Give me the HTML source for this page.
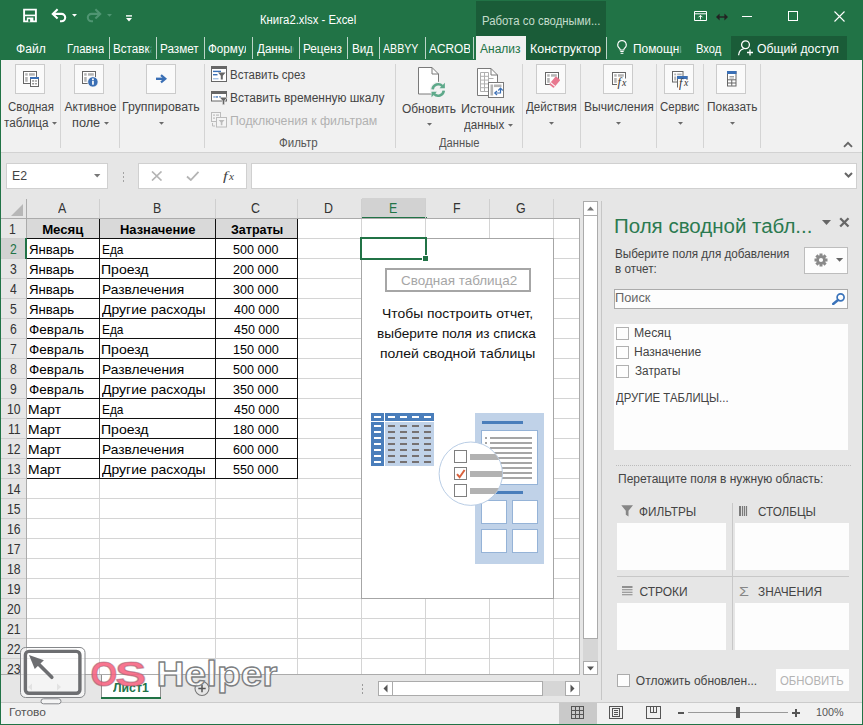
<!DOCTYPE html>
<html lang="ru"><head><meta charset="utf-8"><title>Книга2.xlsx - Excel</title>
<style>
html,body{margin:0;padding:0}
body{width:863px;height:725px;position:relative;overflow:hidden;background:#e6e6e6;font-family:"Liberation Sans",sans-serif;font-size:12px;color:#444}
.a{position:absolute;display:block}
.t{position:absolute;white-space:nowrap;transform-origin:0 0;display:block}
</style></head><body>
<div class="a" style="left:0px;top:0px;width:863px;height:60px;background:#217346;"></div>
<div class="a" style="left:476px;top:1px;width:130px;height:59px;background:#1a5c38;"></div>
<span class="t" style="left:259.59px;top:13.74px;font-size:12px;line-height:12px;color:#fff;transform:scaleX(0.9448);">Книга2.xlsx - Excel</span>
<span class="t" style="left:482.09px;top:14.54px;font-size:12px;line-height:12px;color:#c4dccc;transform:scaleX(0.9476);">Работа со сводными...</span>
<span class="t" style="left:15.58px;top:42.84px;font-size:12px;line-height:12px;color:#fff;transform:scaleX(1.0082);">Файл</span>
<div class="a" style="left:65.5px;top:36px;width:38.5px;height:24px;overflow:hidden">
<span class="t" style="left:1.09px;top:6.84px;font-size:12px;line-height:12px;color:#fff;transform:scaleX(0.9500)">Главная</span>
</div>
<div class="a" style="left:112.25px;top:36px;width:39.75px;height:24px;overflow:hidden">
<span class="t" style="left:1.07px;top:6.84px;font-size:12px;line-height:12px;color:#fff;transform:scaleX(0.9700)">Вставка</span>
<div class="a" style="right:0;top:0;width:4px;height:24px;background:linear-gradient(90deg,rgba(33,115,70,0),#217346)"></div>
</div>
<div class="a" style="left:159.25px;top:36px;width:39.75px;height:24px;overflow:hidden">
<span class="t" style="left:1.06px;top:6.84px;font-size:12px;line-height:12px;color:#fff;transform:scaleX(0.9750)">Разметка</span>
</div>
<div class="a" style="left:207px;top:36px;width:39.3px;height:24px;overflow:hidden">
<span class="t" style="left:1.36px;top:6.84px;font-size:12px;line-height:12px;color:#fff;transform:scaleX(0.9700)">Формулы</span>
</div>
<div class="a" style="left:254.75px;top:36px;width:39.25px;height:24px;overflow:hidden">
<span class="t" style="left:1.94px;top:6.84px;font-size:12px;line-height:12px;color:#fff;transform:scaleX(0.9700)">Данные</span>
<div class="a" style="right:0;top:0;width:4px;height:24px;background:linear-gradient(90deg,rgba(33,115,70,0),#217346)"></div>
</div>
<div class="a" style="left:302px;top:36px;width:39.7px;height:24px;overflow:hidden">
<span class="t" style="left:1.06px;top:6.84px;font-size:12px;line-height:12px;color:#fff;transform:scaleX(0.9800)">Рецензирование</span>
</div>
<span class="t" style="left:352.07px;top:42.84px;font-size:12px;line-height:12px;color:#fff;transform:scaleX(0.9718);">Вид</span>
<span class="t" style="left:382.75px;top:42.84px;font-size:12px;line-height:12px;color:#fff;transform:scaleX(0.8861);">ABBYY</span>
<div class="a" style="left:426.5px;top:36px;width:43.8px;height:24px;overflow:hidden">
<span class="t" style="left:2.00px;top:6.84px;font-size:12px;line-height:12px;color:#fff;transform:scaleX(0.9850)">ACROBAT</span>
</div>
<div class="a" style="left:109px;top:37px;width:1px;height:22px;background:rgba(255,255,255,.7);"></div>
<div class="a" style="left:156px;top:37px;width:1px;height:22px;background:rgba(255,255,255,.7);"></div>
<div class="a" style="left:204px;top:37px;width:1px;height:22px;background:rgba(255,255,255,.7);"></div>
<div class="a" style="left:252px;top:37px;width:1px;height:22px;background:rgba(255,255,255,.7);"></div>
<div class="a" style="left:299px;top:37px;width:1px;height:22px;background:rgba(255,255,255,.7);"></div>
<div class="a" style="left:347px;top:37px;width:1px;height:22px;background:rgba(255,255,255,.7);"></div>
<div class="a" style="left:379px;top:37px;width:1px;height:22px;background:rgba(255,255,255,.7);"></div>
<div class="a" style="left:425px;top:37px;width:1px;height:22px;background:rgba(255,255,255,.7);"></div>
<div class="a" style="left:473px;top:37px;width:1px;height:22px;background:rgba(255,255,255,.7);"></div>
<div class="a" style="left:606px;top:37px;width:1px;height:22px;background:rgba(255,255,255,.7);"></div>
<div class="a" style="left:476px;top:36px;width:50px;height:24px;background:#f1f1f1;"></div>
<span class="t" style="left:480.00px;top:42.84px;font-size:12px;line-height:12px;color:#217346;">Анализ</span>
<span class="t" style="left:530.25px;top:42.84px;font-size:12px;line-height:12px;color:#fff;transform:scaleX(1.0379);">Конструктор</span>
<svg class="a" style="left:615px;top:39px;" width="14" height="16" viewBox="0 0 14 16"><path d="M7 1.5a4.3 4.3 0 0 0-2.6 7.7c.5.5.8 1 .8 1.8h3.6c0-.8.3-1.3.8-1.8A4.3 4.3 0 0 0 7 1.5z" fill="none" stroke="#fff" stroke-width="1.1"/><path d="M5.3 12.5h3.4M5.6 14.3h2.8" stroke="#fff" stroke-width="1"/></svg>
<div class="a" style="left:632px;top:36px;width:49.5px;height:24px;overflow:hidden">
<span class="t" style="left:1.05px;top:6.84px;font-size:12px;line-height:12px;color:#fff;transform:scaleX(0.9900)">Помощник</span>
<div class="a" style="right:0;top:0;width:4px;height:24px;background:linear-gradient(90deg,rgba(33,115,70,0),#217346)"></div>
</div>
<span class="t" style="left:695.86px;top:42.84px;font-size:12px;line-height:12px;color:#fff;transform:scaleX(0.9313);">Вход</span>
<div class="a" style="left:731px;top:36px;width:116px;height:24px;background:#1a5c38;"></div>
<svg class="a" style="left:737px;top:39px;" width="18" height="18" viewBox="0 0 18 18"><circle cx="8.5" cy="5.8" r="3.9" fill="none" stroke="#fff" stroke-width="1.3"/><path d="M1.6 16.2c.3-3.6 2.6-6 5-6.4" fill="none" stroke="#fff" stroke-width="1.3"/><path d="M13 10.5v6M10 13.5h6" stroke="#fff" stroke-width="1.3"/></svg>
<span class="t" style="left:757.45px;top:42.84px;font-size:12px;line-height:12px;color:#fff;transform:scaleX(1.0156);">Общий доступ</span>
<svg class="a" style="left:22px;top:8px;" width="16" height="16" viewBox="0 0 16 16"><path d="M2.100 1.600h11.800v11.800H2.100z" fill="none" stroke="#fff" stroke-width="1.900"/><path d="M3 7.400h10" stroke="#fff" stroke-width="1.600"/><path d="M4.800 9.500h6.600v4H4.800z" fill="#fff"/><path d="M6.200 11.200h1.900v2.600H6.200z" fill="#217346"/></svg>
<svg class="a" style="left:50px;top:8px;" width="18" height="15" viewBox="0 0 18 15"><path d="M3 5.900h8.500a3.700 3.700 0 0 1 0 7.400H10" fill="none" stroke="#fff" stroke-width="2.100"/><path d="M7.600 1.300 2.800 5.900l4.800 4.600" fill="none" stroke="#fff" stroke-width="2.100"/></svg>
<svg class="a" style="left:72px;top:14px;" width="5" height="3" viewBox="0 0 5 3"><path d="M0 0h5L2.500 2.800z" fill="#fff"/></svg>
<svg class="a" style="left:85.4px;top:8px;" width="18" height="15" viewBox="0 0 18 15"><path d="M15 5.900H6.500a3.700 3.700 0 0 0 0 7.400H8" fill="none" stroke="#4f9572" stroke-width="2.100"/><path d="M10.400 1.300l4.800 4.600-4.800 4.600" fill="none" stroke="#4f9572" stroke-width="2.100"/></svg>
<svg class="a" style="left:107px;top:14px;" width="5" height="3" viewBox="0 0 5 3"><path d="M0 0h5L2.500 2.800z" fill="#4f9572"/></svg>
<svg class="a" style="left:125.5px;top:14.5px;" width="7" height="8" viewBox="0 0 7 8"><path d="M0 .9h6" stroke="#fff" stroke-width="1.400"/><path d="M0 3.100h6L3 6.500z" fill="#fff"/></svg>
<svg class="a" style="left:694px;top:11px;" width="13" height="10" viewBox="0 0 13 10"><path d="M.5.5h12v9H.5z" fill="none" stroke="#fff" stroke-width="1"/><path d="M.5 2.800h12" stroke="#fff" stroke-width="1"/><path d="M6.500 8.500V4.500M4.500 6.300l2-2 2 2" fill="none" stroke="#fff" stroke-width="1"/></svg>
<svg class="a" style="left:716px;top:12px;" width="12" height="10" viewBox="0 0 12 10"><path d="M1.2 5h9.6" stroke="#222" stroke-width="1.4"/><path d="M0 5l3.6-3.4v6.8zM12 5 8.400 1.600v6.800z" fill="#222"/></svg>
<div class="a" style="left:742px;top:16px;width:10px;height:1px;background:#fff;"></div>
<div class="a" style="left:788px;top:11px;width:10px;height:10px;border:1px solid #fff;box-sizing:border-box;"></div>
<svg class="a" style="left:834px;top:11px;" width="11" height="11" viewBox="0 0 11 11"><path d="M.5.5l10 10M10.5.5l-10 10" stroke="#fff" stroke-width="1.1"/></svg>
<div class="a" style="left:1px;top:60px;width:861px;height:92px;background:#f1f1f1;"></div>
<div class="a" style="left:1px;top:152px;width:861px;height:1px;background:#d2d2d2;"></div>
<div class="a" style="left:60px;top:64px;width:1px;height:84px;background:#d4d4d4;"></div>
<div class="a" style="left:119px;top:64px;width:1px;height:84px;background:#d4d4d4;"></div>
<div class="a" style="left:204px;top:64px;width:1px;height:84px;background:#d4d4d4;"></div>
<div class="a" style="left:395px;top:64px;width:1px;height:84px;background:#d4d4d4;"></div>
<div class="a" style="left:522px;top:64px;width:1px;height:84px;background:#d4d4d4;"></div>
<div class="a" style="left:580px;top:64px;width:1px;height:84px;background:#d4d4d4;"></div>
<div class="a" style="left:656px;top:64px;width:1px;height:84px;background:#d4d4d4;"></div>
<div class="a" style="left:703px;top:64px;width:1px;height:84px;background:#d4d4d4;"></div>
<div class="a" style="left:760px;top:64px;width:1px;height:84px;background:#d4d4d4;"></div>
<div class="a" style="left:15px;top:64px;width:30px;height:30px;background:#fafafa;border:1px solid #cbcbcb;box-sizing:border-box;"></div>
<div class="a" style="left:74px;top:64px;width:30px;height:30px;background:#fafafa;border:1px solid #cbcbcb;box-sizing:border-box;"></div>
<div class="a" style="left:146px;top:64px;width:30px;height:30px;background:#fafafa;border:1px solid #cbcbcb;box-sizing:border-box;"></div>
<div class="a" style="left:536px;top:64px;width:30px;height:30px;background:#fafafa;border:1px solid #cbcbcb;box-sizing:border-box;"></div>
<div class="a" style="left:603px;top:64px;width:30px;height:30px;background:#fafafa;border:1px solid #cbcbcb;box-sizing:border-box;"></div>
<div class="a" style="left:664px;top:64px;width:30px;height:30px;background:#fafafa;border:1px solid #cbcbcb;box-sizing:border-box;"></div>
<div class="a" style="left:716px;top:64px;width:30px;height:30px;background:#fafafa;border:1px solid #cbcbcb;box-sizing:border-box;"></div>
<span class="t" style="left:8.18px;top:100.84px;font-size:12px;line-height:12px;color:#444;transform:scaleX(0.9521);">Сводная</span>
<span class="t" style="left:4.32px;top:116.64px;font-size:12px;line-height:12px;color:#444;transform:scaleX(0.9742);">таблица</span>
<svg class="a" style="left:52px;top:121.6px;" width="5" height="3" viewBox="0 0 5 3"><path d="M0 0h5L2.500 2.700z" fill="#6a6a6a"/></svg>
<span class="t" style="left:64.50px;top:100.84px;font-size:12px;line-height:12px;color:#444;">Активное</span>
<span class="t" style="left:72.36px;top:116.64px;font-size:12px;line-height:12px;color:#444;transform:scaleX(1.0590);">поле</span>
<svg class="a" style="left:103.7px;top:121.6px;" width="5" height="3" viewBox="0 0 5 3"><path d="M0 0h5L2.500 2.700z" fill="#6a6a6a"/></svg>
<span class="t" style="left:122.27px;top:100.84px;font-size:12px;line-height:12px;color:#444;transform:scaleX(1.0257);">Группировать</span>
<svg class="a" style="left:159.2px;top:121.6px;" width="5" height="3" viewBox="0 0 5 3"><path d="M0 0h5L2.500 2.700z" fill="#6a6a6a"/></svg>
<span class="t" style="left:229.58px;top:68.84px;font-size:12px;line-height:12px;color:#444;transform:scaleX(0.9568);">Вставить срез</span>
<span class="t" style="left:229.55px;top:91.84px;font-size:12px;line-height:12px;color:#444;transform:scaleX(0.9947);">Вставить временную шкалу</span>
<span class="t" style="left:229.52px;top:114.84px;font-size:12px;line-height:12px;color:#b1b1b1;transform:scaleX(1.0241);">Подключения к фильтрам</span>
<span class="t" style="left:278.87px;top:137.14px;font-size:12px;line-height:12px;color:#555;transform:scaleX(0.9571);">Фильтр</span>
<span class="t" style="left:401.96px;top:102.84px;font-size:12px;line-height:12px;color:#444;transform:scaleX(0.9947);">Обновить</span>
<svg class="a" style="left:427.2px;top:123.3px;" width="5" height="3" viewBox="0 0 5 3"><path d="M0 0h5L2.500 2.700z" fill="#6a6a6a"/></svg>
<span class="t" style="left:461.00px;top:102.84px;font-size:12px;line-height:12px;color:#444;transform:scaleX(1.0442);">Источник</span>
<span class="t" style="left:463.88px;top:118.84px;font-size:12px;line-height:12px;color:#444;transform:scaleX(0.9676);">данных</span>
<svg class="a" style="left:507.7px;top:123.6px;" width="5" height="3" viewBox="0 0 5 3"><path d="M0 0h5L2.500 2.700z" fill="#6a6a6a"/></svg>
<span class="t" style="left:438.94px;top:137.14px;font-size:12px;line-height:12px;color:#555;transform:scaleX(0.9350);">Данные</span>
<span class="t" style="left:525.94px;top:100.84px;font-size:12px;line-height:12px;color:#444;transform:scaleX(0.9667);">Действия</span>
<svg class="a" style="left:549.2px;top:121.6px;" width="5" height="3" viewBox="0 0 5 3"><path d="M0 0h5L2.500 2.700z" fill="#6a6a6a"/></svg>
<span class="t" style="left:583.53px;top:100.84px;font-size:12px;line-height:12px;color:#444;transform:scaleX(1.0101);">Вычисления</span>
<svg class="a" style="left:616.2px;top:121.6px;" width="5" height="3" viewBox="0 0 5 3"><path d="M0 0h5L2.500 2.700z" fill="#6a6a6a"/></svg>
<span class="t" style="left:659.93px;top:100.84px;font-size:12px;line-height:12px;color:#444;transform:scaleX(0.9577);">Сервис</span>
<svg class="a" style="left:677.7px;top:121.6px;" width="5" height="3" viewBox="0 0 5 3"><path d="M0 0h5L2.500 2.700z" fill="#6a6a6a"/></svg>
<span class="t" style="left:706.55px;top:100.84px;font-size:12px;line-height:12px;color:#444;transform:scaleX(0.9887);">Показать</span>
<svg class="a" style="left:729.7px;top:121.6px;" width="5" height="3" viewBox="0 0 5 3"><path d="M0 0h5L2.500 2.700z" fill="#6a6a6a"/></svg>
<svg class="a" style="left:843px;top:141px;" width="10" height="7" viewBox="0 0 10 7"><path d="M1 5.800 5 1.800 9 5.800" fill="none" stroke="#666" stroke-width="1.900"/></svg>
<div class="a" style="left:6px;top:163px;width:102px;height:26px;background:#fff;border:1px solid #d0d0d0;box-sizing:border-box;"></div>
<span class="t" style="left:12.32px;top:169.84px;font-size:12px;line-height:12px;color:#444;transform:scaleX(1.0245);">E2</span>
<svg class="a" style="left:94px;top:174px;" width="7" height="4" viewBox="0 0 7 4"><path d="M0 0h6.400L3.2 3.600z" fill="#777"/></svg>
<div class="a" style="left:122.5px;top:172px;width:1.5px;height:1.5px;background:#a3a3a3;"></div>
<div class="a" style="left:122.5px;top:176px;width:1.5px;height:1.5px;background:#a3a3a3;"></div>
<div class="a" style="left:122.5px;top:180px;width:1.5px;height:1.5px;background:#a3a3a3;"></div>
<div class="a" style="left:138px;top:163px;width:109px;height:26px;background:#fff;border:1px solid #d0d0d0;box-sizing:border-box;"></div>
<svg class="a" style="left:151px;top:171px;" width="12" height="10" viewBox="0 0 12 10"><path d="M1 .5l9.500 9M10.500.5 1 9.500" stroke="#b4b4b4" stroke-width="1.700" fill="none"/></svg>
<svg class="a" style="left:186px;top:171px;" width="14" height="10" viewBox="0 0 14 10"><path d="M1 5.500 4.800 9 12.500.8" stroke="#b4b4b4" stroke-width="1.800" fill="none"/></svg>
<span class="t" style="left:223.13px;top:169.07px;font-size:13.5px;line-height:13.5px;color:#444;transform:scaleX(1.2506);font-style:italic;font-family:'Liberation Serif',serif;">f</span>
<span class="t" style="left:229.37px;top:173.26px;font-size:9.5px;line-height:9.5px;color:#444;transform:scaleX(1.1799);font-style:italic;font-family:'Liberation Serif',serif;">x</span>
<div class="a" style="left:251px;top:163px;width:606px;height:26px;background:#fff;border:1px solid #d0d0d0;box-sizing:border-box;"></div>
<svg class="a" style="left:844px;top:172px;" width="9" height="6" viewBox="0 0 9 6"><path d="M1 1l3.500 3.500L8 1" fill="none" stroke="#666" stroke-width="2"/></svg>
<svg class="a" style="left:11px;top:204px;" width="12" height="12" viewBox="0 0 12 12"><path d="M12 0v12H0z" fill="#b7b7b7"/></svg>
<div class="a" style="left:27px;top:219px;width:553px;height:456px;background:#fff;"></div>
<div class="a" style="left:362px;top:198px;width:64px;height:19px;background:#d2d2d2;"></div>
<div class="a" style="left:362px;top:217px;width:65px;height:2px;background:#217346;"></div>
<div class="a" style="left:1px;top:239px;width:25px;height:19px;background:#d2d2d2;"></div>
<div class="a" style="left:25px;top:238px;width:2px;height:21px;background:#217346;"></div>
<svg class="a" style="left:0;top:0" width="863" height="725" shape-rendering="crispEdges"><rect x="27" y="238" width="553" height="1" fill="#d4d4d4"/><rect x="1" y="238" width="25" height="1" fill="#cfcfcf"/><rect x="27" y="258" width="553" height="1" fill="#d4d4d4"/><rect x="1" y="258" width="25" height="1" fill="#cfcfcf"/><rect x="27" y="278" width="553" height="1" fill="#d4d4d4"/><rect x="1" y="278" width="25" height="1" fill="#cfcfcf"/><rect x="27" y="298" width="553" height="1" fill="#d4d4d4"/><rect x="1" y="298" width="25" height="1" fill="#cfcfcf"/><rect x="27" y="318" width="553" height="1" fill="#d4d4d4"/><rect x="1" y="318" width="25" height="1" fill="#cfcfcf"/><rect x="27" y="338" width="553" height="1" fill="#d4d4d4"/><rect x="1" y="338" width="25" height="1" fill="#cfcfcf"/><rect x="27" y="358" width="553" height="1" fill="#d4d4d4"/><rect x="1" y="358" width="25" height="1" fill="#cfcfcf"/><rect x="27" y="378" width="553" height="1" fill="#d4d4d4"/><rect x="1" y="378" width="25" height="1" fill="#cfcfcf"/><rect x="27" y="398" width="553" height="1" fill="#d4d4d4"/><rect x="1" y="398" width="25" height="1" fill="#cfcfcf"/><rect x="27" y="418" width="553" height="1" fill="#d4d4d4"/><rect x="1" y="418" width="25" height="1" fill="#cfcfcf"/><rect x="27" y="438" width="553" height="1" fill="#d4d4d4"/><rect x="1" y="438" width="25" height="1" fill="#cfcfcf"/><rect x="27" y="458" width="553" height="1" fill="#d4d4d4"/><rect x="1" y="458" width="25" height="1" fill="#cfcfcf"/><rect x="27" y="478" width="553" height="1" fill="#d4d4d4"/><rect x="1" y="478" width="25" height="1" fill="#cfcfcf"/><rect x="27" y="498" width="553" height="1" fill="#d4d4d4"/><rect x="1" y="498" width="25" height="1" fill="#cfcfcf"/><rect x="27" y="518" width="553" height="1" fill="#d4d4d4"/><rect x="1" y="518" width="25" height="1" fill="#cfcfcf"/><rect x="27" y="538" width="553" height="1" fill="#d4d4d4"/><rect x="1" y="538" width="25" height="1" fill="#cfcfcf"/><rect x="27" y="558" width="553" height="1" fill="#d4d4d4"/><rect x="1" y="558" width="25" height="1" fill="#cfcfcf"/><rect x="27" y="578" width="553" height="1" fill="#d4d4d4"/><rect x="1" y="578" width="25" height="1" fill="#cfcfcf"/><rect x="27" y="598" width="553" height="1" fill="#d4d4d4"/><rect x="1" y="598" width="25" height="1" fill="#cfcfcf"/><rect x="27" y="618" width="553" height="1" fill="#d4d4d4"/><rect x="1" y="618" width="25" height="1" fill="#cfcfcf"/><rect x="27" y="638" width="553" height="1" fill="#d4d4d4"/><rect x="1" y="638" width="25" height="1" fill="#cfcfcf"/><rect x="27" y="658" width="553" height="1" fill="#d4d4d4"/><rect x="1" y="658" width="25" height="1" fill="#cfcfcf"/><rect x="99" y="219" width="1" height="456" fill="#d4d4d4"/><rect x="99" y="199" width="1" height="19" fill="#cfcfcf"/><rect x="215" y="219" width="1" height="456" fill="#d4d4d4"/><rect x="215" y="199" width="1" height="19" fill="#cfcfcf"/><rect x="297" y="219" width="1" height="456" fill="#d4d4d4"/><rect x="297" y="199" width="1" height="19" fill="#cfcfcf"/><rect x="361" y="219" width="1" height="456" fill="#d4d4d4"/><rect x="361" y="199" width="1" height="19" fill="#cfcfcf"/><rect x="425" y="219" width="1" height="456" fill="#d4d4d4"/><rect x="425" y="199" width="1" height="19" fill="#cfcfcf"/><rect x="489" y="219" width="1" height="456" fill="#d4d4d4"/><rect x="489" y="199" width="1" height="19" fill="#cfcfcf"/><rect x="553" y="219" width="1" height="456" fill="#d4d4d4"/><rect x="553" y="199" width="1" height="19" fill="#cfcfcf"/><rect x="26" y="199" width="1" height="476" fill="#ababab"/><rect x="1" y="218" width="579" height="1" fill="#ababab"/><rect x="579" y="218" width="1" height="457" fill="#ababab"/><rect x="1" y="674" width="579" height="1" fill="#ababab"/><rect x="27" y="219" width="270" height="19" fill="#d9d9d9"/><rect x="27" y="238" width="271" height="1" fill="#111"/><rect x="27" y="258" width="271" height="1" fill="#111"/><rect x="27" y="278" width="271" height="1" fill="#111"/><rect x="27" y="298" width="271" height="1" fill="#111"/><rect x="27" y="318" width="271" height="1" fill="#111"/><rect x="27" y="338" width="271" height="1" fill="#111"/><rect x="27" y="358" width="271" height="1" fill="#111"/><rect x="27" y="378" width="271" height="1" fill="#111"/><rect x="27" y="398" width="271" height="1" fill="#111"/><rect x="27" y="418" width="271" height="1" fill="#111"/><rect x="27" y="438" width="271" height="1" fill="#111"/><rect x="27" y="458" width="271" height="1" fill="#111"/><rect x="27" y="478" width="271" height="1" fill="#111"/><rect x="99" y="219" width="1" height="260" fill="#111"/><rect x="215" y="219" width="1" height="260" fill="#111"/><rect x="297" y="219" width="1" height="260" fill="#111"/><rect x="25" y="238" width="2" height="21" fill="#217346"/></svg>
<span class="t" style="left:58.37px;top:201.52px;font-size:13.8px;line-height:13.8px;color:#333;transform:scaleX(0.9000);">A</span>
<span class="t" style="left:152.68px;top:201.52px;font-size:13.8px;line-height:13.8px;color:#333;transform:scaleX(0.9000);">B</span>
<span class="t" style="left:251.44px;top:201.52px;font-size:13.8px;line-height:13.8px;color:#333;transform:scaleX(0.9000);">C</span>
<span class="t" style="left:324.31px;top:201.52px;font-size:13.8px;line-height:13.8px;color:#333;transform:scaleX(0.9000);">D</span>
<span class="t" style="left:388.62px;top:201.52px;font-size:13.8px;line-height:13.8px;color:#217346;transform:scaleX(0.9000);">E</span>
<span class="t" style="left:452.96px;top:201.52px;font-size:13.8px;line-height:13.8px;color:#333;transform:scaleX(0.9000);">F</span>
<span class="t" style="left:516.31px;top:201.52px;font-size:13.8px;line-height:13.8px;color:#333;transform:scaleX(0.9000);">G</span>
<span class="t" style="left:9.44px;top:222.05px;font-size:14px;line-height:14px;color:#333;transform:scaleX(0.8700);">1</span>
<span class="t" style="left:9.62px;top:242.05px;font-size:14px;line-height:14px;color:#217346;transform:scaleX(0.8700);">2</span>
<span class="t" style="left:9.62px;top:262.05px;font-size:14px;line-height:14px;color:#333;transform:scaleX(0.8700);">3</span>
<span class="t" style="left:9.65px;top:282.05px;font-size:14px;line-height:14px;color:#333;transform:scaleX(0.8700);">4</span>
<span class="t" style="left:9.62px;top:302.05px;font-size:14px;line-height:14px;color:#333;transform:scaleX(0.8700);">5</span>
<span class="t" style="left:9.56px;top:322.05px;font-size:14px;line-height:14px;color:#333;transform:scaleX(0.8700);">6</span>
<span class="t" style="left:9.62px;top:342.05px;font-size:14px;line-height:14px;color:#333;transform:scaleX(0.8700);">7</span>
<span class="t" style="left:9.62px;top:362.05px;font-size:14px;line-height:14px;color:#333;transform:scaleX(0.8700);">8</span>
<span class="t" style="left:9.62px;top:382.05px;font-size:14px;line-height:14px;color:#333;transform:scaleX(0.8700);">9</span>
<span class="t" style="left:7.25px;top:402.05px;font-size:14px;line-height:14px;color:#333;transform:scaleX(0.8700);">10</span>
<span class="t" style="left:7.76px;top:422.05px;font-size:14px;line-height:14px;color:#333;transform:scaleX(0.8700);">11</span>
<span class="t" style="left:7.34px;top:442.05px;font-size:14px;line-height:14px;color:#333;transform:scaleX(0.8700);">12</span>
<span class="t" style="left:7.28px;top:462.05px;font-size:14px;line-height:14px;color:#333;transform:scaleX(0.8700);">13</span>
<span class="t" style="left:7.19px;top:482.05px;font-size:14px;line-height:14px;color:#333;transform:scaleX(0.8700);">14</span>
<span class="t" style="left:7.28px;top:502.05px;font-size:14px;line-height:14px;color:#333;transform:scaleX(0.8700);">15</span>
<span class="t" style="left:7.28px;top:522.05px;font-size:14px;line-height:14px;color:#333;transform:scaleX(0.8700);">16</span>
<span class="t" style="left:7.34px;top:542.05px;font-size:14px;line-height:14px;color:#333;transform:scaleX(0.8700);">17</span>
<span class="t" style="left:7.28px;top:562.05px;font-size:14px;line-height:14px;color:#333;transform:scaleX(0.8700);">18</span>
<span class="t" style="left:7.31px;top:582.05px;font-size:14px;line-height:14px;color:#333;transform:scaleX(0.8700);">19</span>
<span class="t" style="left:7.40px;top:602.05px;font-size:14px;line-height:14px;color:#333;transform:scaleX(0.8700);">20</span>
<span class="t" style="left:7.46px;top:622.05px;font-size:14px;line-height:14px;color:#333;transform:scaleX(0.8700);">21</span>
<span class="t" style="left:7.49px;top:642.05px;font-size:14px;line-height:14px;color:#333;transform:scaleX(0.8700);">22</span>
<span class="t" style="left:7.43px;top:662.05px;font-size:14px;line-height:14px;color:#333;transform:scaleX(0.8700);">23</span>
<span class="t" style="left:42.14px;top:222.53px;font-size:13.2px;line-height:13.2px;color:#000;font-weight:bold;">Месяц</span>
<span class="t" style="left:119.91px;top:222.53px;font-size:13.2px;line-height:13.2px;color:#000;transform:scaleX(0.9800);font-weight:bold;">Назначение</span>
<span class="t" style="left:230.50px;top:222.53px;font-size:13.2px;line-height:13.2px;color:#000;transform:scaleX(0.9481);font-weight:bold;">Затраты</span>
<span class="t" style="left:28.90px;top:242.73px;font-size:13.2px;line-height:13.2px;color:#000;">Январь</span>
<span class="t" style="left:101.55px;top:242.73px;font-size:13.2px;line-height:13.2px;color:#000;transform:scaleX(0.9003);">Еда</span>
<span class="t" style="left:233.25px;top:242.73px;font-size:13.2px;line-height:13.2px;color:#000;transform:scaleX(0.9523);">500 000</span>
<span class="t" style="left:28.90px;top:262.73px;font-size:13.2px;line-height:13.2px;color:#000;">Январь</span>
<span class="t" style="left:101.38px;top:262.73px;font-size:13.2px;line-height:13.2px;color:#000;transform:scaleX(1.0650);">Проезд</span>
<span class="t" style="left:233.12px;top:262.73px;font-size:13.2px;line-height:13.2px;color:#000;transform:scaleX(0.9550);">200 000</span>
<span class="t" style="left:28.90px;top:282.73px;font-size:13.2px;line-height:13.2px;color:#000;">Январь</span>
<span class="t" style="left:101.90px;top:282.73px;font-size:13.2px;line-height:13.2px;color:#000;transform:scaleX(1.0419);">Развлечения</span>
<span class="t" style="left:233.25px;top:282.73px;font-size:13.2px;line-height:13.2px;color:#000;transform:scaleX(0.9523);">300 000</span>
<span class="t" style="left:28.90px;top:302.73px;font-size:13.2px;line-height:13.2px;color:#000;">Январь</span>
<span class="t" style="left:101.68px;top:302.73px;font-size:13.2px;line-height:13.2px;color:#000;transform:scaleX(1.0598);">Другие расходы</span>
<span class="t" style="left:233.50px;top:302.73px;font-size:13.2px;line-height:13.2px;color:#000;transform:scaleX(0.9470);">400 000</span>
<span class="t" style="left:28.76px;top:322.73px;font-size:13.2px;line-height:13.2px;color:#000;transform:scaleX(1.0257);">Февраль</span>
<span class="t" style="left:101.55px;top:322.73px;font-size:13.2px;line-height:13.2px;color:#000;transform:scaleX(0.9003);">Еда</span>
<span class="t" style="left:233.50px;top:322.73px;font-size:13.2px;line-height:13.2px;color:#000;transform:scaleX(0.9470);">450 000</span>
<span class="t" style="left:28.76px;top:342.73px;font-size:13.2px;line-height:13.2px;color:#000;transform:scaleX(1.0257);">Февраль</span>
<span class="t" style="left:101.38px;top:342.73px;font-size:13.2px;line-height:13.2px;color:#000;transform:scaleX(1.0650);">Проезд</span>
<span class="t" style="left:232.80px;top:342.73px;font-size:13.2px;line-height:13.2px;color:#000;transform:scaleX(0.9618);">150 000</span>
<span class="t" style="left:28.76px;top:362.73px;font-size:13.2px;line-height:13.2px;color:#000;transform:scaleX(1.0257);">Февраль</span>
<span class="t" style="left:101.90px;top:362.73px;font-size:13.2px;line-height:13.2px;color:#000;transform:scaleX(1.0419);">Развлечения</span>
<span class="t" style="left:233.25px;top:362.73px;font-size:13.2px;line-height:13.2px;color:#000;transform:scaleX(0.9523);">500 000</span>
<span class="t" style="left:28.76px;top:382.73px;font-size:13.2px;line-height:13.2px;color:#000;transform:scaleX(1.0257);">Февраль</span>
<span class="t" style="left:101.68px;top:382.73px;font-size:13.2px;line-height:13.2px;color:#000;transform:scaleX(1.0598);">Другие расходы</span>
<span class="t" style="left:233.25px;top:382.73px;font-size:13.2px;line-height:13.2px;color:#000;transform:scaleX(0.9523);">350 000</span>
<span class="t" style="left:28.39px;top:402.73px;font-size:13.2px;line-height:13.2px;color:#000;transform:scaleX(1.0481);">Март</span>
<span class="t" style="left:101.55px;top:402.73px;font-size:13.2px;line-height:13.2px;color:#000;transform:scaleX(0.9003);">Еда</span>
<span class="t" style="left:233.50px;top:402.73px;font-size:13.2px;line-height:13.2px;color:#000;transform:scaleX(0.9470);">450 000</span>
<span class="t" style="left:28.39px;top:422.73px;font-size:13.2px;line-height:13.2px;color:#000;transform:scaleX(1.0481);">Март</span>
<span class="t" style="left:101.38px;top:422.73px;font-size:13.2px;line-height:13.2px;color:#000;transform:scaleX(1.0650);">Проезд</span>
<span class="t" style="left:232.80px;top:422.73px;font-size:13.2px;line-height:13.2px;color:#000;transform:scaleX(0.9618);">180 000</span>
<span class="t" style="left:28.39px;top:442.73px;font-size:13.2px;line-height:13.2px;color:#000;transform:scaleX(1.0481);">Март</span>
<span class="t" style="left:101.90px;top:442.73px;font-size:13.2px;line-height:13.2px;color:#000;transform:scaleX(1.0419);">Развлечения</span>
<span class="t" style="left:233.12px;top:442.73px;font-size:13.2px;line-height:13.2px;color:#000;transform:scaleX(0.9550);">600 000</span>
<span class="t" style="left:28.39px;top:462.73px;font-size:13.2px;line-height:13.2px;color:#000;transform:scaleX(1.0481);">Март</span>
<span class="t" style="left:101.68px;top:462.73px;font-size:13.2px;line-height:13.2px;color:#000;transform:scaleX(1.0598);">Другие расходы</span>
<span class="t" style="left:233.25px;top:462.73px;font-size:13.2px;line-height:13.2px;color:#000;transform:scaleX(0.9523);">550 000</span>
<div class="a" style="left:361px;top:238px;width:193px;height:361px;background:#fff;border:1px solid #a6a6a6;box-sizing:border-box;"></div>
<div class="a" style="left:385px;top:268px;width:146px;height:24px;background:#fff;border:2px solid #a6a6a6;box-sizing:border-box;"></div>
<span class="t" style="left:401.33px;top:273.93px;font-size:13.2px;line-height:13.2px;color:#a6a6a6;transform:scaleX(1.0196);">Сводная таблица2</span>
<span class="t" style="left:381.96px;top:306.93px;font-size:13.2px;line-height:13.2px;color:#111;transform:scaleX(1.0530);">Чтобы построить отчет,</span>
<span class="t" style="left:377.04px;top:326.93px;font-size:13.2px;line-height:13.2px;color:#111;transform:scaleX(1.0337);">выберите поля из списка</span>
<span class="t" style="left:380.02px;top:346.73px;font-size:13.2px;line-height:13.2px;color:#111;transform:scaleX(1.0610);">полей сводной таблицы</span>
<div class="a" style="left:360px;top:237px;width:67px;height:23px;border:2px solid #217346;box-sizing:border-box;"></div>
<div class="a" style="left:422px;top:255px;width:7px;height:7px;background:#fff;"></div>
<div class="a" style="left:423px;top:256px;width:5px;height:5px;background:#217346;"></div>
<svg class="a" style="left:0;top:0" width="863" height="725" shape-rendering="crispEdges"><rect x="371" y="413" width="13" height="8" fill="#4a7ebb"/><rect x="385" y="413" width="49" height="8" fill="#4a7ebb"/><rect x="371" y="422" width="13" height="44" fill="#4a7ebb"/><rect x="385" y="422" width="49" height="44" fill="#c0d2e8"/><rect x="374" y="416" width="7" height="2" fill="#fff"/><rect x="388" y="416" width="7" height="2" fill="#fff"/><rect x="400" y="416" width="7" height="2" fill="#fff"/><rect x="412" y="416" width="7" height="2" fill="#fff"/><rect x="424" y="416" width="7" height="2" fill="#fff"/><rect x="374" y="425" width="7" height="2" fill="#fff"/><rect x="388" y="425" width="7" height="2" fill="#767171"/><rect x="400" y="425" width="7" height="2" fill="#767171"/><rect x="412" y="425" width="7" height="2" fill="#767171"/><rect x="424" y="425" width="7" height="2" fill="#767171"/><rect x="374" y="431" width="7" height="2" fill="#fff"/><rect x="388" y="431" width="7" height="2" fill="#767171"/><rect x="400" y="431" width="7" height="2" fill="#767171"/><rect x="412" y="431" width="7" height="2" fill="#767171"/><rect x="424" y="431" width="7" height="2" fill="#767171"/><rect x="374" y="437" width="7" height="2" fill="#fff"/><rect x="388" y="437" width="7" height="2" fill="#767171"/><rect x="400" y="437" width="7" height="2" fill="#767171"/><rect x="412" y="437" width="7" height="2" fill="#767171"/><rect x="424" y="437" width="7" height="2" fill="#767171"/><rect x="374" y="443" width="7" height="2" fill="#fff"/><rect x="388" y="443" width="7" height="2" fill="#767171"/><rect x="400" y="443" width="7" height="2" fill="#767171"/><rect x="412" y="443" width="7" height="2" fill="#767171"/><rect x="424" y="443" width="7" height="2" fill="#767171"/><rect x="374" y="449" width="7" height="2" fill="#fff"/><rect x="388" y="449" width="7" height="2" fill="#767171"/><rect x="400" y="449" width="7" height="2" fill="#767171"/><rect x="412" y="449" width="7" height="2" fill="#767171"/><rect x="424" y="449" width="7" height="2" fill="#767171"/><rect x="374" y="455" width="7" height="2" fill="#fff"/><rect x="388" y="455" width="7" height="2" fill="#767171"/><rect x="400" y="455" width="7" height="2" fill="#767171"/><rect x="412" y="455" width="7" height="2" fill="#767171"/><rect x="424" y="455" width="7" height="2" fill="#767171"/><rect x="374" y="461" width="7" height="2" fill="#fff"/><rect x="388" y="461" width="7" height="2" fill="#767171"/><rect x="400" y="461" width="7" height="2" fill="#767171"/><rect x="412" y="461" width="7" height="2" fill="#767171"/><rect x="424" y="461" width="7" height="2" fill="#767171"/><rect x="475" y="413" width="69" height="151" fill="#c0d2e8"/><rect x="482" y="421" width="41" height="3" fill="#4a7ebb"/><rect x="481.5" y="430.500" width="56" height="54" fill="#fff" stroke="#95b3d7" stroke-width="1"/><rect x="490" y="437" width="42" height="2" fill="#a6a6a6"/><rect x="485" y="437" width="2" height="2" fill="#a6a6a6"/><rect x="490" y="442" width="42" height="2" fill="#a6a6a6"/><rect x="485" y="442" width="2" height="2" fill="#a6a6a6"/><rect x="490" y="447" width="42" height="2" fill="#a6a6a6"/><rect x="490" y="452" width="42" height="2" fill="#a6a6a6"/><rect x="490" y="457" width="42" height="2" fill="#a6a6a6"/><rect x="490" y="462" width="42" height="2" fill="#a6a6a6"/><rect x="490" y="467" width="42" height="2" fill="#a6a6a6"/><rect x="490" y="472" width="42" height="2" fill="#a6a6a6"/><rect x="490" y="477" width="42" height="2" fill="#a6a6a6"/><rect x="482" y="491" width="41" height="3" fill="#4a7ebb"/><rect x="481.5" y="500.5" width="25" height="23" fill="#fff" stroke="#95b3d7" stroke-width="1"/><rect x="512.5" y="500.5" width="25" height="23" fill="#fff" stroke="#95b3d7" stroke-width="1"/><rect x="481.5" y="529.5" width="25" height="23" fill="#fff" stroke="#95b3d7" stroke-width="1"/><rect x="512.5" y="529.5" width="25" height="23" fill="#fff" stroke="#95b3d7" stroke-width="1"/></svg>
<svg class="a" style="left:0;top:0" width="863" height="725"><defs><clipPath id="cc"><circle cx="470.8" cy="473.7" r="31.5"/></clipPath></defs><circle cx="470.8" cy="473.7" r="31.700" fill="#fff" stroke="#b9cde5" stroke-width="1"/><g clip-path="url(#cc)" shape-rendering="crispEdges"><rect x="470" y="454" width="40" height="6" fill="#b2b2b2"/><rect x="470" y="471" width="40" height="6" fill="#b2b2b2"/><rect x="470" y="488" width="40" height="6" fill="#b2b2b2"/><rect x="454.500" y="450.5" width="12" height="12" fill="#fff" stroke="#7f7f7f" stroke-width="1"/><rect x="454.500" y="467.5" width="12" height="12" fill="#fff" stroke="#7f7f7f" stroke-width="1"/><rect x="454.500" y="484.5" width="12" height="12" fill="#fff" stroke="#7f7f7f" stroke-width="1"/></g><path d="M457 474.200l2.600 3 5-7.200" fill="none" stroke="#d9613c" stroke-width="2"/></svg>
<div class="a" style="left:583px;top:201px;width:15px;height:15px;background:#fff;border:1px solid #ababab;box-sizing:border-box;"></div>
<svg class="a" style="left:587px;top:206px;" width="8" height="5" viewBox="0 0 8 5"><path d="M0 4.500h7L3.500.5z" fill="#777"/></svg>
<div class="a" style="left:583px;top:215px;width:15px;height:446px;background:#d6d6d6;"></div>
<div class="a" style="left:583px;top:215px;width:15px;height:424px;background:#fff;border:1px solid #ababab;box-sizing:border-box;"></div>
<div class="a" style="left:583px;top:661px;width:15px;height:14px;background:#fff;border:1px solid #ababab;box-sizing:border-box;"></div>
<svg class="a" style="left:587px;top:666px;" width="8" height="5" viewBox="0 0 8 5"><path d="M0 .5h7L3.500 4.500z" fill="#555"/></svg>
<div class="a" style="left:361.5px;top:684px;width:1.5px;height:1.5px;background:#9a9a9a;"></div>
<div class="a" style="left:361.5px;top:688px;width:1.5px;height:1.5px;background:#9a9a9a;"></div>
<div class="a" style="left:361.5px;top:692px;width:1.5px;height:1.5px;background:#9a9a9a;"></div>
<div class="a" style="left:378px;top:681px;width:202px;height:15px;background:#d6d6d6;"></div>
<div class="a" style="left:378px;top:681px;width:15px;height:15px;background:#fff;border:1px solid #ababab;box-sizing:border-box;"></div>
<svg class="a" style="left:383px;top:684px;" width="5" height="9" viewBox="0 0 5 9"><path d="M4.500 .5v8L.5 4.500z" fill="#555"/></svg>
<div class="a" style="left:392px;top:681px;width:151px;height:15px;background:#fff;border:1px solid #ababab;box-sizing:border-box;"></div>
<div class="a" style="left:565px;top:681px;width:15px;height:15px;background:#fff;border:1px solid #ababab;box-sizing:border-box;"></div>
<svg class="a" style="left:570px;top:684px;" width="5" height="9" viewBox="0 0 5 9"><path d="M.5 .5v8l4-4z" fill="#555"/></svg>
<div class="a" style="left:101px;top:675px;width:60px;height:23px;background:#fff;"></div>
<div class="a" style="left:101px;top:697px;width:60px;height:2px;background:#217346;"></div>
<div class="a" style="left:101px;top:675px;width:1px;height:22px;background:#8f8f8f;"></div>
<div class="a" style="left:160px;top:675px;width:1px;height:22px;background:#8f8f8f;"></div>
<span class="t" style="left:112.94px;top:681.54px;font-size:12px;line-height:12px;color:#217346;transform:scaleX(1.0196);font-weight:bold;">Лист1</span>
<svg class="a" style="left:194px;top:681px;" width="16" height="16" viewBox="0 0 16 16"><circle cx="8" cy="7.500" r="7" fill="none" stroke="#777" stroke-width="1.100"/><path d="M8 3.800v7.400M4.300 7.500h7.400" stroke="#555" stroke-width="1.500"/></svg>
<div class="a" style="left:601px;top:201px;width:1px;height:499px;background:#c6c6c6;"></div>
<span class="t" style="left:614.36px;top:215.67px;font-size:20px;line-height:20px;color:#2b7a50;transform:scaleX(1.0242);">Поля сводной табл...</span>
<svg class="a" style="left:822px;top:220px;" width="10" height="6" viewBox="0 0 10 6"><path d="M0 0h9L4.500 5z" fill="#666"/></svg>
<svg class="a" style="left:839px;top:217px;" width="11" height="11" viewBox="0 0 11 11"><path d="M1.200 1.200l8.300 8.300M9.500 1.200l-8.300 8.300" stroke="#666" stroke-width="2.300"/></svg>
<span class="t" style="left:615.06px;top:247.64px;font-size:12px;line-height:12px;color:#444;transform:scaleX(0.9747);">Выберите поля для добавления</span>
<span class="t" style="left:615.18px;top:262.84px;font-size:12px;line-height:12px;color:#444;transform:scaleX(0.9732);">в отчет:</span>
<div class="a" style="left:804px;top:247px;width:44px;height:27px;background:#fdfdfd;border:1px solid #bdbdbd;box-sizing:border-box;"></div>
<svg class="a" style="left:813.5px;top:252.6px;" width="14" height="14" viewBox="0 0 14 14"><g transform="translate(7 7)"><circle r="3.400" fill="none" stroke="#8a8a8a" stroke-width="2.600"/><rect x="-1.500" y="-6.500" width="3" height="2.800" fill="#8a8a8a" transform="rotate(0)"/><rect x="-1.500" y="-6.500" width="3" height="2.800" fill="#8a8a8a" transform="rotate(45)"/><rect x="-1.500" y="-6.500" width="3" height="2.800" fill="#8a8a8a" transform="rotate(90)"/><rect x="-1.500" y="-6.500" width="3" height="2.800" fill="#8a8a8a" transform="rotate(135)"/><rect x="-1.500" y="-6.500" width="3" height="2.800" fill="#8a8a8a" transform="rotate(180)"/><rect x="-1.500" y="-6.500" width="3" height="2.800" fill="#8a8a8a" transform="rotate(225)"/><rect x="-1.500" y="-6.500" width="3" height="2.800" fill="#8a8a8a" transform="rotate(270)"/><rect x="-1.500" y="-6.500" width="3" height="2.800" fill="#8a8a8a" transform="rotate(315)"/></g></svg>
<svg class="a" style="left:836px;top:258.2px;" width="8" height="4" viewBox="0 0 8 4"><path d="M0 0h7.200L3.600 3.800z" fill="#666"/></svg>
<div class="a" style="left:614px;top:289px;width:234px;height:20px;background:#fdfdfd;border:1px solid #ababab;box-sizing:border-box;"></div>
<span class="t" style="left:615.48px;top:291.54px;font-size:12px;line-height:12px;color:#666;transform:scaleX(1.0668);">Поиск</span>
<svg class="a" style="left:832px;top:292px;" width="13" height="13" viewBox="0 0 13 13"><circle cx="8.600" cy="5.300" r="3.500" fill="none" stroke="#3a73ba" stroke-width="1.700"/><path d="M6 8 1.200 12" stroke="#3a73ba" stroke-width="2.400" stroke-linecap="round"/></svg>
<div class="a" style="left:614px;top:324px;width:234px;height:126px;background:#fdfdfd;"></div>
<div class="a" style="left:616px;top:326.5px;width:13px;height:13px;background:#fdfdfd;border:1px solid #b0b0b0;box-sizing:border-box;"></div>
<div class="a" style="left:616px;top:345.5px;width:13px;height:13px;background:#fdfdfd;border:1px solid #b0b0b0;box-sizing:border-box;"></div>
<div class="a" style="left:616px;top:364.5px;width:13px;height:13px;background:#fdfdfd;border:1px solid #b0b0b0;box-sizing:border-box;"></div>
<span class="t" style="left:634.32px;top:326.94px;font-size:12px;line-height:12px;color:#444;transform:scaleX(1.0223);">Месяц</span>
<span class="t" style="left:634.33px;top:345.94px;font-size:12px;line-height:12px;color:#444;transform:scaleX(1.0074);">Назначение</span>
<span class="t" style="left:634.89px;top:364.94px;font-size:12px;line-height:12px;color:#444;transform:scaleX(0.9796);">Затраты</span>
<span class="t" style="left:615.94px;top:391.84px;font-size:12px;line-height:12px;color:#444;transform:scaleX(0.9476);">ДРУГИЕ ТАБЛИЦЫ...</span>
<div class="a" style="left:616px;top:465px;width:235px;height:0;border-top:1px dotted #bcbcbc"></div>
<span class="t" style="left:618.04px;top:472.84px;font-size:12px;line-height:12px;color:#444;">Перетащите поля в нужную область:</span>
<div class="a" style="left:732px;top:503px;width:1px;height:147px;background:#c8c8c8;"></div>
<div class="a" style="left:617px;top:576px;width:232px;height:1px;background:#c8c8c8;"></div>
<span class="t" style="left:639.35px;top:505.54px;font-size:12px;line-height:12px;color:#444;transform:scaleX(0.9816);">ФИЛЬТРЫ</span>
<span class="t" style="left:757.82px;top:505.54px;font-size:12px;line-height:12px;color:#444;transform:scaleX(0.9731);">СТОЛБЦЫ</span>
<span class="t" style="left:639.40px;top:585.74px;font-size:12px;line-height:12px;color:#444;">СТРОКИ</span>
<span class="t" style="left:757.59px;top:585.74px;font-size:12px;line-height:12px;color:#444;transform:scaleX(0.9852);">ЗНАЧЕНИЯ</span>
<div class="a" style="left:617px;top:523px;width:109px;height:47px;background:#fdfdfd;"></div>
<div class="a" style="left:735px;top:523px;width:114px;height:47px;background:#fdfdfd;"></div>
<div class="a" style="left:617px;top:603px;width:109px;height:47px;background:#fdfdfd;"></div>
<div class="a" style="left:735px;top:603px;width:114px;height:47px;background:#fdfdfd;"></div>
<svg class="a" style="left:620.5px;top:505px;" width="13" height="12" viewBox="0 0 13 12"><path d="M.3 .3h11.700L7.500 5.800v5.700L4.800 9.800V5.800z" fill="#868686"/></svg>
<svg class="a" style="left:739px;top:506px;" width="10" height="10" viewBox="0 0 10 10"><path d="M1 0v10M3.500 0v10M5.500 0v10M7.500 0v10" stroke="#7a7a7a" stroke-width="1.200"/><path d="M1 0v10" stroke="#7a7a7a" stroke-width="2"/></svg>
<svg class="a" style="left:621.5px;top:586px;" width="11" height="10" viewBox="0 0 11 10"><path d="M0 1h10.500" stroke="#868686" stroke-width="1.800"/><path d="M0 3.800h10.500M0 6.300h10.500M0 8.800h10.500" stroke="#868686" stroke-width="1.100"/></svg>
<span class="t" style="left:739.20px;top:584.50px;font-size:13px;line-height:13px;color:#868686;transform:scaleX(1.2337);">Σ</span>
<div class="a" style="left:617px;top:674px;width:13px;height:13px;background:#fdfdfd;border:1px solid #ababab;box-sizing:border-box;"></div>
<span class="t" style="left:635.86px;top:674.54px;font-size:12px;line-height:12px;color:#444;">Отложить обновлен...</span>
<div class="a" style="left:776px;top:669px;width:73px;height:22px;background:#fdfdfd;"></div>
<span class="t" style="left:780.29px;top:674.84px;font-size:12px;line-height:12px;color:#b3b3b3;transform:scaleX(0.9487);">ОБНОВИТЬ</span>
<div class="a" style="left:1px;top:702px;width:861px;height:22px;background:#f1f1f1;"></div>
<div class="a" style="left:1px;top:701.5px;width:861px;height:1.5px;background:#cbcbcb;"></div>
<span class="t" style="left:8.84px;top:706.79px;font-size:11px;line-height:11px;color:#555;transform:scaleX(1.0854);">Готово</span>
<div class="a" style="left:559px;top:703px;width:38px;height:21px;background:#c9c9c9;"></div>
<svg class="a" style="left:571px;top:706px;" width="13" height="13" viewBox="0 0 13 13"><path d="M.5 .5h12v12H.5zM.5 4.500h12M.5 8.500h12M4.500 .5v12M8.500 .5v12" fill="none" stroke="#555" stroke-width="1" shape-rendering="crispEdges"/></svg>
<svg class="a" style="left:609px;top:706px;shape-rendering:crispEdges;" width="14" height="13" viewBox="0 0 14 13"><path d="M.5 .5h13v12H.5z" fill="none" stroke="#555"/><path d="M3.500 2.500h7v8h-7z" fill="none" stroke="#555"/><path d="M5 4.500h4M5 6.500h4M5 8.500h4" fill="none" stroke="#555"/></svg>
<svg class="a" style="left:646px;top:706px;shape-rendering:crispEdges;" width="15" height="13" viewBox="0 0 15 13"><path d="M.5 .5h14v12H.5z" fill="none" stroke="#555"/><path d="M4.500 .5v6h6V.5M7.500 .5v6" fill="none" stroke="#555"/></svg>
<div class="a" style="left:678px;top:712px;width:6px;height:2px;background:#555;"></div>
<div class="a" style="left:688px;top:712px;width:100px;height:1px;background:#999;"></div>
<div class="a" style="left:736px;top:707px;width:4px;height:11px;background:#555;"></div>
<div class="a" style="left:792px;top:712px;width:8px;height:2px;background:#555;"></div>
<div class="a" style="left:795px;top:709px;width:2px;height:8px;background:#555;"></div>
<span class="t" style="left:815.79px;top:706.89px;font-size:11px;line-height:11px;color:#555;transform:scaleX(0.9796);">100%</span>
<div class="a" style="left:0px;top:0px;width:1px;height:725px;background:#217346;"></div>
<div class="a" style="left:861.5px;top:0px;width:1.5px;height:725px;background:#217346;"></div>
<div class="a" style="left:0px;top:723.7px;width:863px;height:1.3px;background:#217346;"></div>
<svg class="a" style="left:0;top:0" width="863" height="152"><rect x="23.5" y="71.5" width="13" height="12" fill="#fff" stroke="#666"/><rect x="25.2" y="73.2" width="2.500" height="2.500" fill="#b4b4b4"/><rect x="29" y="73.2" width="5.8" height="2.500" fill="#b4b4b4"/><rect x="25.2" y="77" width="2.500" height="4.8" fill="#b4b4b4"/><rect x="30.500" y="77.500" width="8" height="9" fill="#fff" stroke="#666"/><rect x="30" y="77" width="9" height="2" fill="#3a6fb5"/><rect x="32.300" y="80.200" width="1.500" height="1.500" fill="#777"/><rect x="34.800" y="80.500" width="2.200" height="1" fill="#777"/><rect x="32.300" y="83" width="1.500" height="1.500" fill="#777"/><rect x="34.800" y="83.300" width="2.200" height="1" fill="#777"/><rect x="82.5" y="71.5" width="13" height="12" fill="#fff" stroke="#666"/><rect x="84.2" y="73.2" width="2.500" height="2.500" fill="#b4b4b4"/><rect x="88" y="73.2" width="5.8" height="2.500" fill="#b4b4b4"/><rect x="84.2" y="77" width="2.500" height="4.8" fill="#b4b4b4"/><circle cx="92.900" cy="81.900" r="5.200" fill="#3a6fb5" stroke="#fafafa" stroke-width=".8"/><rect x="92.100" y="80.800" width="1.700" height="3.900" fill="#fff"/><circle cx="92.950" cy="79.200" r="1" fill="#fff"/><path d="M156 78.800h8.500" stroke="#3a6fb5" stroke-width="2.400"/><path d="M161 75.200l4.300 3.600-4.300 3.600" fill="none" stroke="#3a6fb5" stroke-width="2.200"/><rect x="211.500" y="66.500" width="15" height="15" fill="#fff" stroke="#666"/><rect x="211" y="66" width="16" height="3" fill="#666"/><rect x="213" y="70.700" width="8" height="1.400" fill="#3a6fb5"/><rect x="213" y="74" width="4.500" height="1.400" fill="#3a6fb5"/><rect x="213" y="78" width="5.500" height="1.400" fill="#a9c4e4"/><path d="M218 72.500h7.600l-2.800 3.300v3.700h-2v-3.700z" fill="#666"/><rect x="211.500" y="91.500" width="15" height="9.500" fill="#fff" stroke="#666"/><rect x="211" y="91" width="16" height="3" fill="#666"/><rect x="213.500" y="96.300" width="1.200" height="1.300" fill="#3a6fb5"/><rect x="215.500" y="96.300" width="2.500" height="1.300" fill="#3a6fb5"/><rect x="219" y="96.300" width="2" height="1.300" fill="#3a6fb5"/><path d="M219.400 97.200h8.200l-3 3.500v4h-2.200v-4z" fill="#666" stroke="#f1f1f1" stroke-width=".6"/><rect x="211.500" y="112.500" width="9" height="9" fill="#f4f4f4" stroke="#bcbcbc"/><rect x="213" y="114.500" width="2" height="1.200" fill="#bcbcbc"/><rect x="216" y="114.500" width="3" height="1.200" fill="#bcbcbc"/><rect x="213" y="117.500" width="2" height="1.200" fill="#bcbcbc"/><rect x="216.500" y="117.500" width="10" height="9.500" fill="#f4f4f4" stroke="#bcbcbc"/><path d="M218.700 120h5.800l-2.100 2.500v2.800h-1.600v-2.800z" fill="#bcbcbc"/><path d="M212.500 123v3h2.500" fill="none" stroke="#bcbcbc"/><path d="M418.500 67.500h13.500l6.500 6.500v20h-20z" fill="#fff" stroke="#7a7a7a"/><path d="M432 67.500v6.500h6.500" fill="none" stroke="#7a7a7a"/><circle cx="438.200" cy="90" r="8.300" fill="#f1f1f1"/><path d="M432.600 89.300a5.700 5.700 0 0 1 9.800-3.200" fill="none" stroke="#5ea98a" stroke-width="2.600"/><path d="M444.900 82.800v5.400h-5.400z" fill="#5ea98a"/><path d="M443.800 90.700a5.700 5.700 0 0 1-9.800 3.200" fill="none" stroke="#5ea98a" stroke-width="2.600"/><path d="M431.500 97.200v-5.400h5.400z" fill="#5ea98a"/><path d="M477.500 68.500h13.500l6.500 6.500v20.500h-20z" fill="#fff" stroke="#7a7a7a"/><path d="M491 68.500v6.500h6.500" fill="none" stroke="#7a7a7a"/><path d="M480.500 72.500h8v19h-8zM480.500 76.300h8M480.500 80.100h8M480.500 83.900h8M480.500 87.700h8M484.500 72.500v19M488.500 78.500h5M488.500 82.500h3" fill="none" stroke="#b0b0b0"/><rect x="488.500" y="82.500" width="15" height="15" fill="#fff" stroke="#7a7a7a"/><rect x="490.500" y="84.500" width="2.600" height="11" fill="#b4b4b4"/><rect x="494" y="84.500" width="7.500" height="2.600" fill="#b4b4b4"/><path d="M500.500 88.500v4.500h-5.500" fill="none" stroke="#3a6fb5" stroke-width="1.200"/><path d="M498.300 90.500l2.200-2.400 2.200 2.400M497 91l-2.200 2 2.200 2" fill="none" stroke="#3a6fb5" stroke-width="1.200"/><rect x="545.5" y="72.5" width="13" height="12" fill="#fff" stroke="#666"/><rect x="547.2" y="74.2" width="2.500" height="2.500" fill="#b4b4b4"/><rect x="551" y="74.2" width="5.8" height="2.500" fill="#b4b4b4"/><rect x="547.2" y="78" width="2.500" height="4.8" fill="#b4b4b4"/><rect x="555" y="81" width="5" height="5" fill="#fafafa"/><g transform="rotate(-50 554.700 82.200)"><rect x="549.500" y="79.200" width="10.500" height="6" rx="1" fill="#e8788f"/><rect x="551.300" y="79.200" width="1" height="6" fill="#fafafa"/></g><rect x="612.5" y="72.5" width="13" height="12" fill="#fff" stroke="#666"/><rect x="614.2" y="74.2" width="2.500" height="2.500" fill="#b4b4b4"/><rect x="618" y="74.2" width="5.8" height="2.500" fill="#b4b4b4"/><rect x="614.2" y="78" width="2.500" height="4.8" fill="#b4b4b4"/><rect x="617" y="78.500" width="10" height="8" fill="#fafafa"/><rect x="672.500" y="71.500" width="10.500" height="10.500" fill="#fff" stroke="#666"/><rect x="674.200" y="73.500" width="2" height="1.800" fill="#b4b4b4"/><rect x="677.200" y="73.500" width="4.500" height="1.800" fill="#b4b4b4"/><rect x="674.200" y="76.500" width="2" height="4" fill="#b4b4b4"/><rect x="677.500" y="76.500" width="9.500" height="10.500" fill="#fff" stroke="#666"/><rect x="677" y="76" width="10.500" height="3" fill="#3a6fb5"/><rect x="678" y="80" width="10" height="8" fill="#fafafa"/><rect x="727.500" y="71.500" width="8.500" height="14.500" fill="#fff" stroke="#666"/><rect x="727" y="71" width="9.500" height="3" fill="#3a6fb5"/><path d="M729.500 76.500h4.500M729.500 78h4.500" stroke="#8a8a8a" stroke-width=".8"/><path d="M727.500 79.800h8.500M727.500 83h8.500M731.750 79.800v6" stroke="#666" stroke-width="1"/></svg>
<span class="t" style="left:617.38px;top:75.92px;font-size:12.5px;line-height:12.5px;color:#333;font-style:italic;font-family:'Liberation Serif',serif;">f</span>
<span class="t" style="left:622.45px;top:78.76px;font-size:9.5px;line-height:9.5px;color:#333;transform:scaleX(1.0411);font-style:italic;font-family:'Liberation Serif',serif;">x</span>
<span class="t" style="left:678.88px;top:76.62px;font-size:12.5px;line-height:12.5px;color:#333;transform:scaleX(0.9558);font-style:italic;font-family:'Liberation Serif',serif;">f</span>
<span class="t" style="left:683.75px;top:79.46px;font-size:9.5px;line-height:9.5px;color:#333;transform:scaleX(1.0179);font-style:italic;font-family:'Liberation Serif',serif;">x</span>
<svg class="a" style="left:0;top:0" width="300" height="725"><rect x="20.500" y="647.500" width="64.500" height="50" rx="5" fill="rgba(255,255,255,.5)" stroke="#85878a" stroke-width="1"/><rect x="25.400" y="651.400" width="54.500" height="41.900" rx="3.500" fill="rgba(255,255,255,.15)" stroke="#6d6e71" stroke-width="3.400"/><rect x="41" y="698.800" width="20" height="5" rx="2.500" fill="#f4f4f4" stroke="#85878a" stroke-width="1"/><path d="M51.800 677.300 37 662.500" stroke="#6d6e71" stroke-width="3.600" stroke-linecap="round"/><path d="M29 655l14.900 5.300-9.150 8.700z" fill="#6d6e71"/><path d="M32 683.500v7l-4-3.500zM57 683.500v7l4-3.500z" fill="#e2e2e2"/><g fill="rgba(247,98,127,.9)" stroke="rgba(150,95,110,.5)" stroke-width="1.200"><text x="90.600" y="685.600" textLength="26.800" font-family="Liberation Sans, sans-serif" font-weight="bold" font-size="35" lengthAdjust="spacingAndGlyphs" stroke-linejoin="round">O</text><text x="115.200" y="685.600" textLength="31" font-family="Liberation Sans, sans-serif" font-weight="bold" font-size="35" lengthAdjust="spacingAndGlyphs" stroke-linejoin="round">S</text></g><text x="156.500" y="686" font-family="Liberation Sans, sans-serif" font-weight="bold" font-size="35.500" textLength="121" lengthAdjust="spacingAndGlyphs" fill="rgba(255,255,255,.78)" stroke="#7d7f82" stroke-width="1.300" stroke-linejoin="round">Helper</text></svg>
</body></html>
